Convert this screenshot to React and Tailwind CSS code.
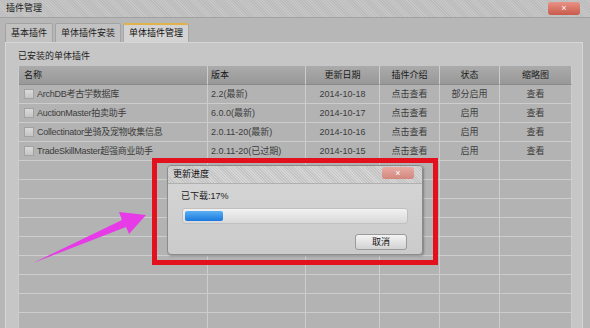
import React from "react";

const FONT = "font-['Liberation_Sans','Noto_Sans_CJK_SC',sans-serif]";

const plugins = [
	{ name: "ArchDB考古学数据库", ver: "2.2(最新)", date: "2014-10-18", state: "部分启用" },
	{ name: "AuctionMaster拍卖助手", ver: "6.0.0(最新)", date: "2014-10-17", state: "启用" },
	{ name: "Collectinator坐骑及宠物收集信息", ver: "2.0.11-20(最新)", date: "2014-10-16", state: "启用" },
	{ name: "TradeSkillMaster超强商业助手", ver: "2.0.11-20(已过期)", date: "2014-10-15", state: "启用" },
];

const cols = "grid grid-cols-[189px_98px_74px_60px_60px_72px]";
const cell = "h-[19px] flex items-center border-r border-b border-[#cdcdcd]";

function Tab({ label, active }) {
	return (
		<div
			className={`h-[19px] px-[5px] flex items-center rounded-t-[2px] border border-b-0 ${
				active
					? "bg-[#d3d3d3] border-[#a8a8a8] border-t-2 border-t-[#e2b24a] text-[#111]"
					: "bg-[#c2c2c2] border-[#a3a3a3] text-[#222]"
			}`}
		>
			{label}
		</div>
	);
}

function Row({ p }) {
	if (!p) {
		return (
			<div className={cols}>
				{[0, 1, 2, 3, 4, 5].map((i) => (
					<div key={i} className={cell} />
				))}
			</div>
		);
	}
	return (
		<div className={`${cols} text-[#3c3c3c]`}>
			<div className={`${cell} pl-[5px] gap-[3px]`}>
				<span className="w-[10px] h-[10px] border border-[#a2a2a2] bg-[linear-gradient(#dadada,#c4c4c4)]" />
				<span className="tracking-[-0.25px]">{p.name}</span>
			</div>
			<div className={`${cell} pl-[3px]`}>{p.ver}</div>
			<div className={`${cell} justify-center`}>{p.date}</div>
			<div className={`${cell} justify-center`}>点击查看</div>
			<div className={`${cell} justify-center`}>{p.state}</div>
			<div className={`${cell} justify-center`}>查看</div>
		</div>
	);
}

function ProgressDialog() {
	return (
		<div className="absolute left-[152px] top-[158px] w-[286px] h-[107px] border-[5px] border-[#e3111d] pl-[10px] pt-[2px]">
			<div className="w-[256px] h-[90px] rounded-[4px] border border-[#8c8c8c] bg-[linear-gradient(#d6d6d6,#cbcbcb)] shadow-[1px_1px_2px_rgba(0,0,0,0.3)] flex flex-col">
				<div className="relative h-[18px] rounded-t-[4px] border-b border-[#b0b0b0] pl-[5px] flex items-center text-[#111] bg-[repeating-linear-gradient(45deg,#c4c4c4_0px,#c4c4c4_1px,#d6d6d6_1px,#d6d6d6_2px)]">
					更新进度
					<div className="absolute right-[8px] top-[1px] w-[32px] h-[12px] rounded-[3px] bg-[linear-gradient(#e6aca4,#d3867c)] flex items-center justify-center text-white text-[9px] leading-none">
						×
					</div>
				</div>
				<div className="pl-[13px] pt-[6px] h-[19px] flex items-center text-[#222]">已下载:17%</div>
				<div className="ml-[14px] mt-[5px] w-[226px] h-[16px] rounded-[3px] border border-[#c0c0c0] bg-[linear-gradient(#f2f2f2,#d8d8d8)] p-[2px]">
					<div className="w-[38px] h-full rounded-[2px] bg-[linear-gradient(#5ab0f4,#1a78dc)]" />
				</div>
				<div className="flex justify-end pr-[15px] mt-[10px]">
					<div className="w-[52px] h-[16px] rounded-[3px] border border-[#9a9a9a] bg-[linear-gradient(#f4f4f4,#d2d2d2)] flex items-center justify-center text-[#111]">
						取消
					</div>
				</div>
			</div>
		</div>
	);
}

export default function App() {
	const rows = [...plugins, ...Array(10).fill(null)];
	return (
		<div className={`relative w-[590px] h-[328px] overflow-hidden bg-[#b7b7b7] text-[9px] leading-none ${FONT}`}>
			{/* window title */}
			<div className="h-[18px] flex items-center justify-between pl-[6px] pr-[10px] border-b border-[#a2a2a2] text-[9px] text-[#1a1a1a] bg-[repeating-linear-gradient(45deg,#bcbcbc_0px,#bcbcbc_1px,#c6c6c6_1px,#c6c6c6_2px)]">
				<span>插件管理</span>
				<div className="w-[32px] h-[13px] rounded-[3px] bg-[linear-gradient(#e89286,#c85a4a)] flex items-center justify-center text-white text-[9px]">
					×
				</div>
			</div>

			{/* tabs */}
			<div className="flex items-end gap-[2px] pl-[5px] pt-[5px] h-[24px] text-[9px]">
				<Tab label="基本插件" />
				<Tab label="单体插件安装" />
				<Tab label="单体插件管理" active />
			</div>

			{/* panel */}
			<div className="ml-[5px] w-[578px] h-[300px] bg-[#c6c6c6] border-l border-t border-r border-[#d6d6d6] pl-[12px]">
				<div className="h-[23px] pt-[9px] text-[#222]">已安装的单体插件</div>
				<div className="w-[553px] border-l border-[#cdcdcd] bg-[#b3b3b3]">
					<div className={`${cols} text-[#1a1a1a] bg-[linear-gradient(#ababab,#979797)]`}>
						<div className={`${cell} pl-[5px] border-b-[#8a8a8a]`}>名称</div>
						<div className={`${cell} pl-[3px] border-b-[#8a8a8a]`}>版本</div>
						<div className={`${cell} justify-center border-b-[#8a8a8a]`}>更新日期</div>
						<div className={`${cell} justify-center border-b-[#8a8a8a]`}>插件介绍</div>
						<div className={`${cell} justify-center border-b-[#8a8a8a]`}>状态</div>
						<div className={`${cell} justify-center border-b-[#8a8a8a]`}>缩略图</div>
					</div>
					{rows.map((p, i) => (
						<Row key={i} p={p} />
					))}
				</div>
			</div>

			<ProgressDialog />

			{/* pointer arrow */}
			<svg className="absolute left-0 top-0 pointer-events-none" width="590" height="328" viewBox="0 0 590 328">
				<polygon points="33,263 122,220 119,212 146,215 129,234 126,227" fill="#e63be6" />
			</svg>
		</div>
	);
}
